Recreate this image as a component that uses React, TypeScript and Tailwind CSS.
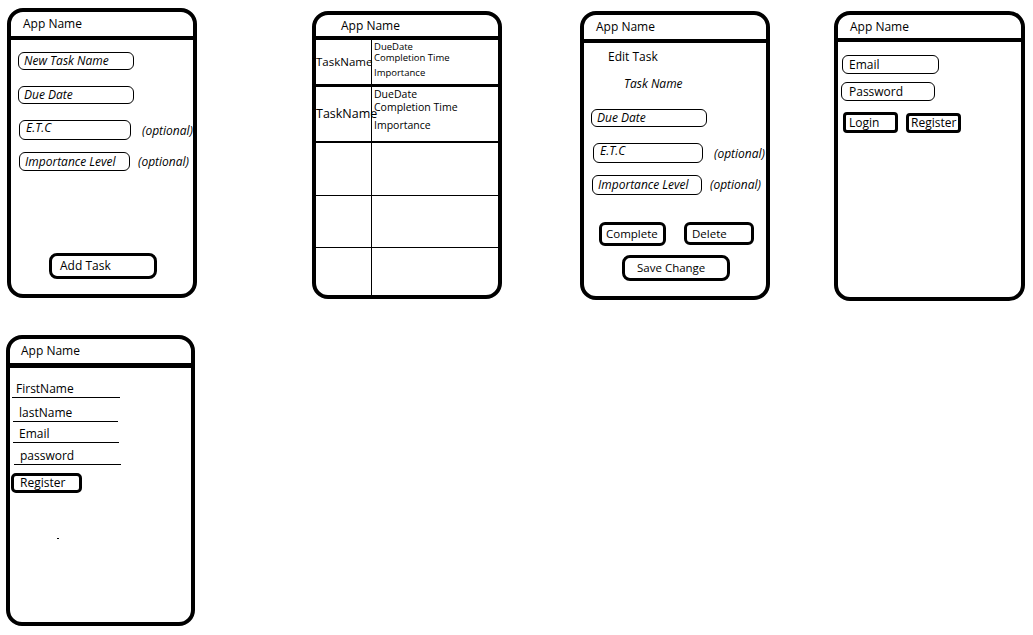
import type { ReactNode } from "react";

type PhoneProps = {
  className: string;
  headerClass: string;
  title: string;
  children?: ReactNode;
};

const Phone = ({ className, headerClass, title, children }: PhoneProps) => (
  <div
    className={`flex shrink-0 flex-col overflow-hidden rounded-[16px] border-4 border-black bg-white ${className}`}
  >
    <div
      className={`flex shrink-0 items-center border-black text-[12px] ${headerClass}`}
    >
      {title}
    </div>
    <div className="relative flex flex-1 flex-col">{children}</div>
  </div>
);

const Field = ({ label, className }: { label: string; className: string }) => (
  <div
    className={`flex shrink-0 items-center rounded-[6px] border border-black pl-[5px] text-[12px] italic ${className}`}
  >
    {label}
  </div>
);

const Optional = ({ className }: { className: string }) => (
  <span className={`text-[12px] italic ${className}`}>(optional)</span>
);

const TaskRow = ({ big, className }: { big?: boolean; className: string }) => (
  <div className={`flex shrink-0 border-black ${className}`}>
    <div
      className={`flex w-[56px] shrink-0 items-center border-r border-black ${big ? "text-[12.5px]" : "text-[11.5px]"}`}
    >
      TaskName
    </div>
    <div
      className={`flex flex-col pl-[2px] ${big ? "pt-[1px] text-[10.5px] leading-[13px]" : "pt-[1px] text-[9.5px] leading-[11px]"}`}
    >
      <span>DueDate</span>
      <span>Completion Time</span>
      <span className={big ? "mt-[5px]" : "mt-[4px]"}>Importance</span>
    </div>
  </div>
);

const EmptyRow = ({ className }: { className: string }) => (
  <div className={`flex shrink-0 border-black ${className}`}>
    <div className="w-[56px] shrink-0 border-r border-black" />
  </div>
);

export default function App() {
  return (
    <div
      className="relative h-[635px] w-[1033px] overflow-hidden bg-white text-black"
      style={{ fontFamily: '"Open Sans", "Noto Sans", sans-serif' }}
    >
      <div className="flex items-start pt-[8px]">
        {/* add task */}
        <Phone
          className="ml-[7px] h-[290px] w-[190px]"
          headerClass="h-[28px] border-b-4 pl-[12px]"
          title="App Name"
        >
          <Field label="New Task Name" className="ml-[7px] mt-[12px] h-[18px] w-[116px]" />
          <Field label="Due Date" className="ml-[7px] mt-[16px] h-[18px] w-[116px]" />
          <div className="mt-[16px] flex items-start">
            <div className="ml-[8px] flex h-[20px] w-[112px] shrink-0 items-start rounded-[6px] border border-black pl-[6px] text-[12px] leading-[13px] italic">
              E.T.C
            </div>
            <Optional className="ml-[11px] mt-[2px]" />
          </div>
          <div className="mt-[12px] flex items-center">
            <Field label="Importance Level" className="ml-[8px] h-[19px] w-[111px]" />
            <Optional className="ml-[8px]" />
          </div>
          <div className="mb-[15px] ml-[38px] mt-auto flex h-[26px] w-[108px] items-center rounded-[8px] border-[3px] border-black pl-[8px] text-[12px]">
            Add Task
          </div>
        </Phone>

        {/* task list */}
        <Phone
          className="ml-[115px] mt-[3px] h-[288px] w-[190px]"
          headerClass="h-[25px] border-b-4 pl-[25px]"
          title="App Name"
        >
          <TaskRow className="h-[47px] border-b-[3px]" />
          <TaskRow big className="h-[56px] border-b-2" />
          <EmptyRow className="h-[53px] border-b" />
          <EmptyRow className="h-[52px] border-b" />
          <EmptyRow className="flex-1" />
        </Phone>

        {/* edit task */}
        <Phone
          className="ml-[78px] mt-[3px] h-[289px] w-[190px]"
          headerClass="h-[28px] border-b-4 pl-[12px]"
          title="App Name"
        >
          <span className="ml-[24px] mt-[6px] text-[12px] leading-[16px]">Edit Task</span>
          <span className="ml-[40px] mt-[11px] text-[12px] leading-[16px] italic">Task Name</span>
          <Field label="Due Date" className="ml-[7px] mt-[17px] h-[18px] w-[116px]" />
          <div className="mt-[16px] flex items-start">
            <div className="ml-[9px] flex h-[20px] w-[110px] shrink-0 items-start rounded-[6px] border border-black pl-[6px] text-[12px] leading-[13px] italic">
              E.T.C
            </div>
            <Optional className="ml-[11px] mt-[2px]" />
          </div>
          <div className="mt-[12px] flex items-center">
            <Field label="Importance Level" className="ml-[8px] h-[20px] w-[110px]" />
            <Optional className="ml-[8px]" />
          </div>
          <div className="mt-[27px] flex items-start">
            <div className="ml-[15px] flex h-[24px] w-[67px] items-center rounded-[6px] border-[3px] border-black pl-[4px] text-[11.5px]">
              Complete
            </div>
            <div className="ml-[18px] flex h-[23px] w-[70px] items-center rounded-[6px] border-[3px] border-black pl-[5px] text-[11.5px]">
              Delete
            </div>
          </div>
          <div className="ml-[38px] mt-[9px] flex h-[26px] w-[108px] items-center rounded-[8px] border-[3px] border-black pl-[12px] text-[11.5px]">
            Save Change
          </div>
          <div className="absolute right-0 top-0 h-[28px] w-[2px] bg-white" />
        </Phone>

        {/* login */}
        <Phone
          className="ml-[64px] mt-[3px] h-[290px] w-[191px]"
          headerClass="h-[27px] border-b-4 pl-[12px]"
          title="App Name"
        >
          <div className="ml-[4px] mt-[13px] flex h-[19px] w-[97px] items-center rounded-[6px] border border-black pl-[6px] text-[12px]">
            Email
          </div>
          <div className="ml-[3px] mt-[8px] flex h-[19px] w-[94px] items-center rounded-[6px] border border-black pl-[7px] text-[12px]">
            Password
          </div>
          <div className="mt-[11px] flex items-start">
            <div className="ml-[5px] flex h-[21px] w-[55px] items-center rounded-[4px] border-[3px] border-black pl-[3px] text-[12px]">
              Login
            </div>
            <div className="ml-[8px] mt-[1px] flex h-[20px] w-[55px] items-center rounded-[4px] border-[3px] border-black pl-[2px] text-[12px]">
              Register
            </div>
          </div>
        </Phone>
      </div>

      {/* register */}
      <div className="mt-[34px] flex">
        <Phone
          className="ml-[6px] h-[291px] w-[189px]"
          headerClass="h-[29px] border-b-[5px] pl-[11px]"
          title="App Name"
        >
          <div className="ml-[2px] mt-[13px] w-[108px] border-b border-black pl-[4px] text-[12px] leading-[16px]">
            FirstName
          </div>
          <div className="ml-[3px] mt-[7px] w-[105px] border-b border-black pl-[6px] text-[12px] leading-[16px]">
            lastName
          </div>
          <div className="ml-[3px] mt-[4px] w-[106px] border-b border-black pl-[6px] text-[12px] leading-[16px]">
            Email
          </div>
          <div className="ml-[4px] mt-[5px] w-[107px] border-b border-black pl-[6px] text-[12px] leading-[16px]">
            password
          </div>
          <div className="ml-[1px] mt-[8px] flex h-[20px] w-[71px] items-center rounded-[5px] border-[3px] border-black pl-[6px] text-[12px]">
            Register
          </div>
          <span className="ml-[47px] mt-[45px] h-[1px] w-[2px] bg-black" />
        </Phone>
      </div>
    </div>
  );
}
